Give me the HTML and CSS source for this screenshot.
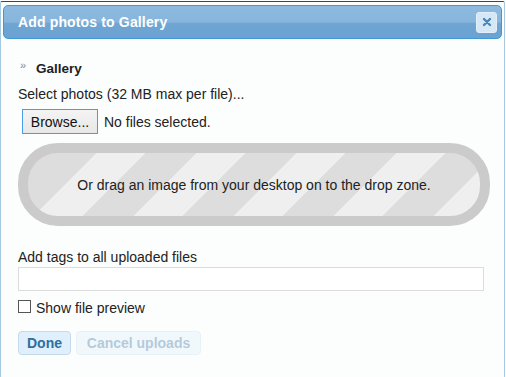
FILE: index.html
```html
<!DOCTYPE html>
<html>
<head>
<meta charset="utf-8">
<link rel="stylesheet" href="styles.css">
</head>
<body>
<div class="dialog">
  <div class="titlebar">
    <span class="title">Add photos to Gallery</span>
    <span class="close"><svg width="10" height="10" viewBox="0 0 10 10"><path d="M2 2 L8 8 M8 2 L2 8" stroke="#4a86bd" stroke-width="2.4" stroke-linecap="round"/></svg></span>
  </div>
  <div class="content">
    <div class="album"><span class="raquo">»</span><span class="album-name">Gallery</span></div>
    <div class="select">Select photos (32 MB max per file)...</div>
    <div class="file-row"><span class="browse">Browse...</span><span class="nofile">No files selected.</span></div>
    <div class="dropzone"><span>Or drag an image from your desktop on to the drop zone.</span></div>
    <div class="tags-label">Add tags to all uploaded files</div>
    <div class="tags-input"></div>
    <label class="preview"><span class="checkbox"></span>Show file preview</label>
    <div class="buttons">
      <span class="btn done">Done</span>
      <span class="btn cancel">Cancel uploads</span>
    </div>
  </div>
</div>
</body>
</html>
```
FILE: styles.css
```css
html, body {
  margin: 0;
  padding: 0;
  width: 506px;
  height: 377px;
  overflow: hidden;
  background: #fff;
}
body {
  font-family: "Liberation Sans", Arial, sans-serif;
  font-size: 14px;
  color: #222;
}
.dialog {
  box-sizing: border-box;
  width: 505px;
  height: 377px;
  margin-top: 1px;
  border: 1px solid #a6c9e2;
  border-top-color: #444;
  background: #fcfdfd;
  padding: 3px 2px 0 2px;
  border-radius: 2px;
}
.titlebar {
  box-sizing: border-box;
  height: 34px;
  border: 1px solid #4297d7;
  border-radius: 5px;
  background: linear-gradient(to bottom, #8ebade 0%, #87b5dc 50%, #6fa5d3 55%, #6aa2d2 100%);
  display: flex;
  align-items: center;
  justify-content: space-between;
  padding: 0 4px 0 14px;
}
.title {
  color: #fff;
  font-weight: bold;
  font-size: 14px;
  letter-spacing: 0.15px;
}
.close {
  box-sizing: border-box;
  width: 21px;
  height: 21px;
  border: 1px solid #e2eef8;
  border-radius: 3px;
  background: #d6e7f5;
  display: flex;
  align-items: center;
  justify-content: center;
}
.content {
  padding: 21px 0 0 15px;
}
.album {
  display: flex;
  align-items: center;
  height: 16px;
  padding-left: 2px;
}
.raquo {
  color: #888;
  font-size: 11px;
  width: 16px;
  position: relative;
  top: -3px;
}
.album-name {
  font-weight: bold;
  font-size: 13.5px;
}
.select {
  margin-top: 10px;
  height: 16px;
  line-height: 16px;
}
.file-row {
  margin-top: 7px;
  display: flex;
  align-items: center;
  height: 25px;
}
.browse {
  box-sizing: border-box;
  margin-left: 4px;
  width: 76px;
  height: 25px;
  border: 1px solid #4a9ce6;
  background: linear-gradient(to bottom, #f4f4f4, #e7e7e7);
  display: flex;
  align-items: center;
  justify-content: center;
  color: #111;
}
.nofile {
  margin-left: 6px;
}
.dropzone {
  box-sizing: border-box;
  margin-top: 9px;
  width: 472px;
  height: 83px;
  border: 10px solid #cbcbcb;
  border-radius: 40px;
  background: repeating-linear-gradient(-45deg,
    #efefef 0px, #efefef 33.2px,
    #dddddd 33.2px, #dddddd 68.6px,
    #efefef 68.6px, #efefef 70.71px);
  display: flex;
  align-items: center;
  justify-content: center;
  color: #222;
}
.tags-label {
  margin-top: 23px;
  height: 16px;
  line-height: 16px;
}
.tags-input {
  box-sizing: border-box;
  margin-top: 2px;
  width: 466px;
  height: 24px;
  border: 1px solid #dcdcdc;
  background: #fff;
}
.preview {
  margin-top: 9px;
  display: flex;
  align-items: center;
  height: 16px;
}
.checkbox {
  box-sizing: border-box;
  width: 13px;
  height: 13px;
  border: 1px solid #555;
  background: #fff;
  margin-right: 5px;
  position: relative;
  top: -2px;
}
.buttons {
  margin-top: 15px;
  display: flex;
  gap: 5px;
}
.btn {
  box-sizing: border-box;
  height: 24px;
  display: flex;
  align-items: center;
  justify-content: center;
  border: 1px solid #c5dbec;
  border-radius: 4px;
  background: #dfeffc;
  color: #2e6e9e;
  font-weight: bold;
}
.done {
  width: 53px;
}
.cancel {
  width: 125px;
  opacity: 0.35;
}
```
